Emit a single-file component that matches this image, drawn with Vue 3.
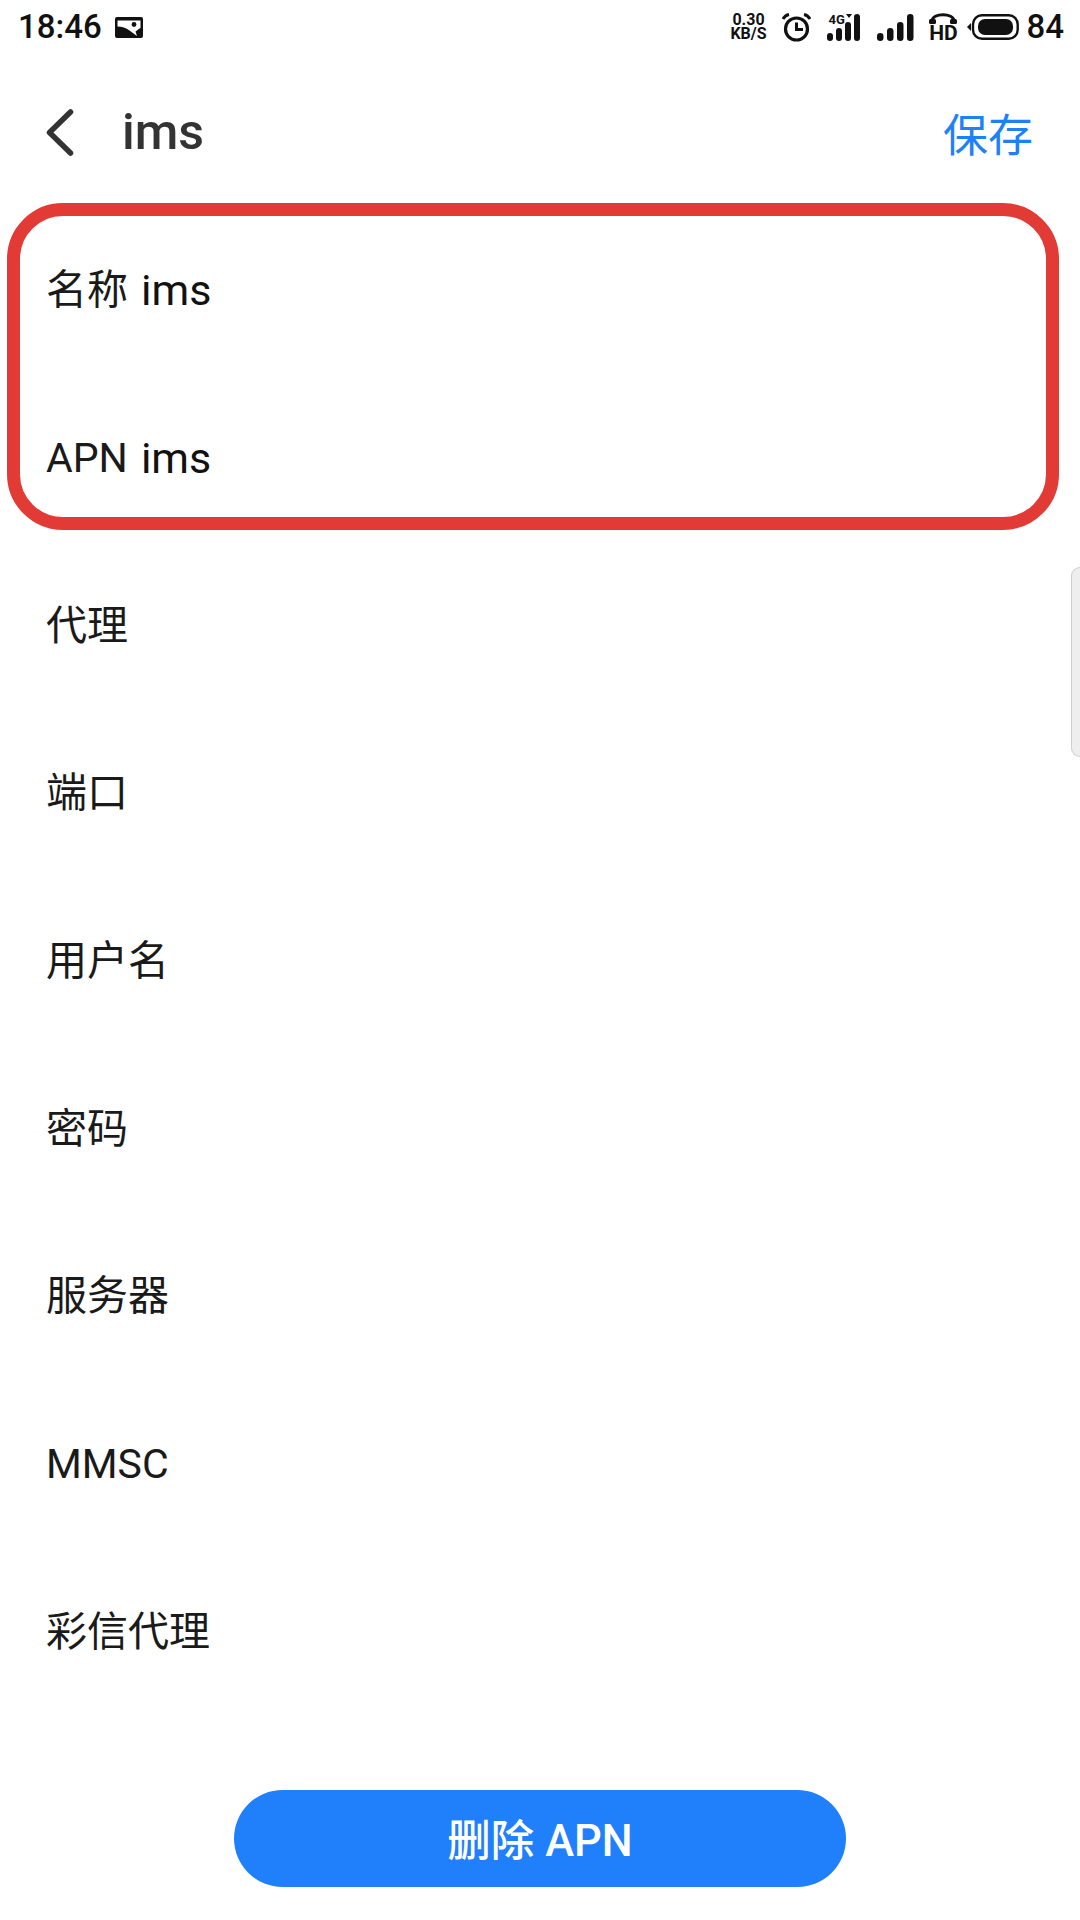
<script setup>
const rows = [
  { label: '名称', value: 'ims' },
  { label: 'APN', value: 'ims' },
  { label: '代理' },
  { label: '端口' },
  { label: '用户名' },
  { label: '密码' },
  { label: '服务器' },
  { label: 'MMSC' },
  { label: '彩信代理' }
]
const bars1 = [
  { x: 0, h: 8 }, { x: 9, h: 13 }, { x: 18, h: 19 }, { x: 27, h: 27 }
]
const bars2 = [
  { x: 0, h: 8 }, { x: 10, h: 13 }, { x: 20, h: 19 }, { x: 30, h: 27 }
]
</script>

<template>
  <div class="page">
    <div class="status">
      <span class="time">18:46</span>
      <svg class="pic" width="28" height="21" viewBox="0 0 28 21">
        <rect width="28" height="21" rx="2" fill="#111" />
        <path d="M2.500 3.500H25.500V11C23.500 12 22 13.500 20.500 14.500L22 19 14.500 13.500C11 10.800 7 9.500 2.500 9.500z" fill="#fff" />
        <circle cx="19" cy="7.500" r="2.400" fill="#111" />
      </svg>
      <span class="spacer"></span>
      <div class="speed">0.30<br />KB/S</div>
      <svg class="alarm" width="29" height="29" viewBox="0 0 29 29">
        <circle cx="14.500" cy="16" r="11" fill="none" stroke="#111" stroke-width="3.200" />
        <path d="M14.500 9.500V16.500H21" fill="none" stroke="#111" stroke-width="3" />
        <path d="M1 6C2.500 3.500 4.500 2 7 1.500M28 6C26.500 3.500 24.500 2 22 1.500" fill="none" stroke="#111" stroke-width="3" />
      </svg>
      <div class="sig sig1">
        <span class="tag">4G</span>
        <svg width="37" height="27" viewBox="0 0 37 27">
          <path d="M20 0h6l-3 4z" fill="#111" />
          <rect v-for="b in bars1" :key="b.x" :x="b.x + 1" :y="27 - b.h" width="6" :height="b.h" rx="3" fill="#111" />
        </svg>
      </div>
      <svg class="sig2" width="37" height="27" viewBox="0 0 37 27">
        <rect v-for="b in bars2" :key="b.x" :x="b.x" :y="27 - b.h" width="6.500" :height="b.h" rx="3.200" fill="#111" />
      </svg>
      <div class="hd">
        <svg width="28" height="12" viewBox="0 0 28 12">
          <path d="M3 8C3 -0.500 25 -0.500 25 8" fill="none" stroke="#111" stroke-width="3" />
          <rect x="0" y="6" width="7" height="5" rx="1.500" fill="#111" />
          <rect x="21" y="6" width="7" height="5" rx="1.500" fill="#111" />
        </svg>
        <span>HD</span>
      </div>
      <svg class="batt" width="52" height="26" viewBox="0 0 52 26">
        <path d="M0 13 4 9V17z" fill="#111" />
        <rect x="6" y="1.300" width="44.700" height="23.400" rx="9" fill="none" stroke="#111" stroke-width="2.400" />
        <rect x="11" y="5" width="35" height="16" rx="7" fill="#111" />
      </svg>
      <span class="level">84</span>
    </div>

    <header class="bar">
      <svg class="back" width="28" height="47" viewBox="0 0 28 47">
        <path d="M24.500 3 3.500 23.500 24.500 44" fill="none" stroke="#333" stroke-width="5.500" stroke-linecap="round" stroke-linejoin="round" />
      </svg>
      <h1 class="title">ims</h1>
      <span class="save">保存</span>
    </header>

    <main class="list">
      <div class="callout"></div>
      <div v-for="r in rows" :key="r.label" class="row">
        <span class="label">{{ r.label }}</span>
        <span v-if="r.value" class="value">{{ r.value }}</span>
      </div>
    </main>

    <div class="thumb"></div>

    <footer class="foot">
      <button class="del">删除 APN</button>
    </footer>
  </div>
</template>

<style scoped>
.page {
  position: relative;
  width: 1080px;
  height: 1920px;
  display: flex;
  flex-direction: column;
  overflow: hidden;
  background: #fff;
  font-family: Roboto, "Noto Sans CJK SC", sans-serif;
  color: #1a1a1a;
}
.status {
  height: 54px;
  flex: none;
  display: flex;
  align-items: center;
  padding: 0 16px 0 18px;
  box-sizing: border-box;
  color: #111;
}
.time {
  font-size: 33px;
  font-weight: 500;
  line-height: 52px;
}
.pic { margin-left: 13px; }
.spacer { flex: 1; }
.speed {
  width: 38px;
  text-align: center;
  font-weight: 700;
  line-height: 14px;
  font-size: 16px;
}
.alarm { margin-left: 15px; }
.sig { position: relative; margin-left: 15px; height: 27px; }
.sig svg { display: block; }
.tag {
  position: absolute;
  left: 2px;
  top: 0;
  font-size: 13px;
  font-weight: 700;
  line-height: 12px;
}
.sig2 { margin-left: 14px; }
.hd {
  margin-left: 15px;
  width: 28px;
  display: flex;
  flex-direction: column;
  align-items: center;
  font-weight: 700;
  font-size: 21px;
  line-height: 16px;
}
.hd svg { display: block; }
.batt { margin-left: 10px; }
.level {
  margin-left: 7px;
  font-size: 33px;
  font-weight: 500;
  line-height: 52px;
}
.bar {
  height: 108px;
  margin-top: 24px;
  flex: none;
  display: flex;
  align-items: center;
  padding: 0 47px 0 46px;
  box-sizing: border-box;
}
.title {
  margin: 0 0 0 48px;
  flex: 1;
  font-size: 50px;
  font-weight: 500;
  color: #333;
}
.save {
  font-size: 45px;
  color: #2080f8;
}
.list {
  position: relative;
  flex: 1;
  min-height: 0;
  padding-top: 21px;
}
.callout {
  position: absolute;
  left: 7px;
  top: 17px;
  width: 1052px;
  height: 327px;
  box-sizing: border-box;
  border: 13px solid #e23a35;
  border-radius: 56px;
}
.row {
  height: 167.700px;
  display: flex;
  align-items: center;
  padding-left: 46px;
  gap: 13px;
  font-size: 41px;
  line-height: 1;
}
.value { color: #111; font-size: 43px; }
.thumb {
  position: absolute;
  right: 0;
  top: 567px;
  width: 9px;
  height: 190px;
  box-sizing: border-box;
  background: #eeeeee;
  border: 1.500px solid #cfcfcf;
  border-right: 0;
  border-radius: 9px 0 0 9px;
}
.foot {
  position: absolute;
  left: 0;
  right: 0;
  bottom: 33px;
  display: flex;
  justify-content: center;
}
.del {
  width: 612px;
  height: 97px;
  padding: 0 0 2px;
  border: 0;
  border-radius: 48.500px;
  background: #2080fb;
  color: #fff;
  font: 500 43.500px Roboto, "Noto Sans CJK SC", sans-serif;
}
</style>
